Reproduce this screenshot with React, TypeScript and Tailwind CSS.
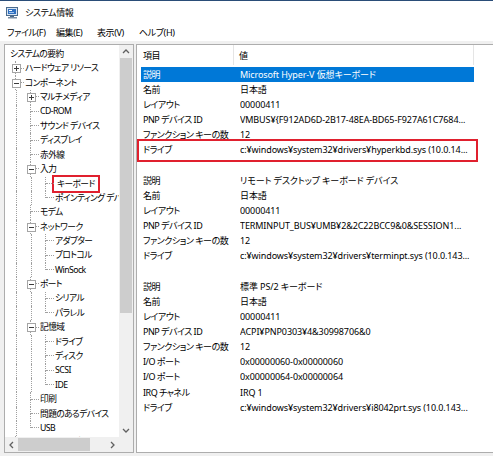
import React from 'react'

type Node = {
  label: string
  toggle?: '+' | '-'
  selected?: boolean
  children?: Node[]
}

type Row = {
  label: string
  depth: number
  guides: boolean[]
  last: boolean
  toggle?: '+' | '-'
  selected?: boolean
}

const tree: Node = {
  label: 'システムの要約',
  children: [
    { label: 'ハードウェア リソース', toggle: '+' },
    {
      label: 'コンポーネント',
      toggle: '-',
      children: [
        { label: 'マルチメディア', toggle: '+' },
        { label: 'CD-ROM' },
        { label: 'サウンド デバイス' },
        { label: 'ディスプレイ' },
        { label: '赤外線' },
        {
          label: '入力',
          toggle: '-',
          children: [{ label: 'キーボード', selected: true }, { label: 'ポインティング デバイス' }],
        },
        { label: 'モデム' },
        {
          label: 'ネットワーク',
          toggle: '-',
          children: [{ label: 'アダプター' }, { label: 'プロトコル' }, { label: 'WinSock' }],
        },
        {
          label: 'ポート',
          toggle: '-',
          children: [{ label: 'シリアル' }, { label: 'パラレル' }],
        },
        {
          label: '記憶域',
          toggle: '-',
          children: [{ label: 'ドライブ' }, { label: 'ディスク' }, { label: 'SCSI' }, { label: 'IDE' }],
        },
        { label: '印刷' },
        { label: '問題のあるデバイス' },
        { label: 'USB' },
      ],
    },
    { label: 'ソフトウェア環境', toggle: '+' },
  ],
}

// flatten the tree into rows, remembering which guide columns keep going
function flatten(node: Node, depth: number, guides: boolean[], last: boolean, out: Row[]) {
  out.push({ label: node.label, depth, guides, last, toggle: node.toggle, selected: node.selected })
  const kids = node.children || []
  kids.forEach((child, i) => {
    const childGuides = depth === 0 ? [] : [...guides, !last]
    flatten(child, depth + 1, childGuides, i === kids.length - 1, out)
  })
  return out
}

const rows = flatten(tree, 0, [], true, [])

function ToggleBox({ sign }: { sign: '+' | '-' }) {
  return (
    <div className="absolute left-[3px] top-[3px] flex h-[9px] w-[9px] items-center justify-center border border-[#a5a5a5] bg-white">
      <div className="relative flex h-[5px] w-[5px] items-center justify-center">
        <div className="h-px w-[5px] bg-[#3c3c3c]" />
        {sign === '+' && <div className="absolute h-[5px] w-px bg-[#3c3c3c]" />}
      </div>
    </div>
  )
}

function Connector({ last, toggle }: { last: boolean; toggle?: '+' | '-' }) {
  return (
    <div className="relative grid h-full w-[15px] shrink-0 grid-cols-[7px_8px] grid-rows-2">
      <div className="border-r border-dotted border-[#a0a0a0]" />
      <div className="border-b border-dotted border-[#a0a0a0]" />
      <div className={last ? '' : 'border-r border-dotted border-[#a0a0a0]'} />
      <div />
      {toggle && <ToggleBox sign={toggle} />}
    </div>
  )
}

function TreeRow({ row }: { row: Row }) {
  return (
    <div className="flex h-[14.4px] shrink-0 items-center whitespace-nowrap">
      {row.guides.map((g, i) => (
        <div key={i} className="h-full w-[15px] shrink-0">
          {g && <div className="h-full w-[8px] border-r border-dotted border-[#a0a0a0]" />}
        </div>
      ))}
      {row.depth > 0 && <Connector last={row.last} toggle={row.toggle} />}
      {row.selected ? (
        <span className="ml-px inline-block h-[12px] px-[2px] leading-[12px] outline-2 outline-offset-[1px] outline-[#e0202e]">
          {row.label}
        </span>
      ) : (
        <span className="ml-px">{row.label}</span>
      )}
    </div>
  )
}

function Chevron({ dir }: { dir: 'up' | 'down' | 'left' | 'right' }) {
  const d = {
    up: 'M1 5 L4 2 L7 5',
    down: 'M1 2 L4 5 L7 2',
    left: 'M5 1 L2 4 L5 7',
    right: 'M2 1 L5 4 L2 7',
  }[dir]
  return (
    <svg width="8" height="8" viewBox="0 0 8 8">
      <path d={d} fill="none" stroke="#606060" strokeWidth="1.3" />
    </svg>
  )
}

type Prop = { key: string; value: string; boxed?: boolean; active?: boolean }

const props: Prop[] = [
  { key: '説明', value: 'Microsoft Hyper-V 仮想キーボード', active: true },
  { key: '名前', value: '日本語' },
  { key: 'レイアウト', value: '00000411' },
  { key: 'PNP デバイス ID', value: 'VMBUS¥{F912AD6D-2B17-48EA-BD65-F927A61C7684...' },
  { key: 'ファンクション キーの数', value: '12' },
  { key: 'ドライブ', value: 'c:¥windows¥system32¥drivers¥hyperkbd.sys (10.0.14...', boxed: true },
  { key: '', value: '' },
  { key: '説明', value: 'リモート デスクトップ キーボード デバイス' },
  { key: '名前', value: '日本語' },
  { key: 'レイアウト', value: '00000411' },
  { key: 'PNP デバイス ID', value: 'TERMINPUT_BUS¥UMB¥2&2C22BCC9&0&SESSION1...' },
  { key: 'ファンクション キーの数', value: '12' },
  { key: 'ドライブ', value: 'c:¥windows¥system32¥drivers¥terminpt.sys (10.0.143...' },
  { key: '', value: '' },
  { key: '説明', value: '標準 PS/2 キーボード' },
  { key: '名前', value: '日本語' },
  { key: 'レイアウト', value: '00000411' },
  { key: 'PNP デバイス ID', value: 'ACPI¥PNP0303¥4&30998706&0' },
  { key: 'ファンクション キーの数', value: '12' },
  { key: 'I/O ポート', value: '0x00000060-0x00000060' },
  { key: 'I/O ポート', value: '0x00000064-0x00000064' },
  { key: 'IRQ チャネル', value: 'IRQ 1' },
  { key: 'ドライブ', value: 'c:¥windows¥system32¥drivers¥i8042prt.sys (10.0.143...' },
]

function AppIcon() {
  return (
    <svg width="13" height="12" viewBox="0 0 13 12">
      <rect x="0.5" y="0.5" width="11" height="8" fill="#d6e4f2" stroke="#4a6a8c" />
      <rect x="2" y="2" width="8" height="5" fill="#2f6fc0" />
      <rect x="3" y="3" width="3" height="1" fill="#ffffff" />
      <rect x="3" y="5" width="5" height="1" fill="#9fc4ee" />
      <rect x="4" y="9" width="4" height="1" fill="#4a6a8c" />
      <rect x="2" y="10" width="9" height="1.5" fill="#7a8ea4" />
    </svg>
  )
}

export default function App() {
  return (
    <div className="flex h-[456px] w-[493px] flex-col overflow-hidden bg-[#f0f0f0] font-['Noto_Sans','Noto_Sans_CJK_JP',sans-serif] text-[9px] leading-none tracking-[-0.4px] text-black [font-feature-settings:'palt']">
      <div className="h-px shrink-0 bg-[#2a4d78]" />

      {/* title bar */}
      <div className="flex h-[23px] shrink-0 items-center gap-[6px] bg-white pl-[6px]">
        <AppIcon />
        <span>システム情報</span>
      </div>

      {/* menu */}
      <div className="flex h-[17px] shrink-0 items-center bg-white pl-[7px]">
        <span className="w-[49px]">ファイル(F)</span>
        <span className="w-[41px]">編集(E)</span>
        <span className="w-[42px]">表示(V)</span>
        <span>ヘルプ(H)</span>
      </div>

      <div className="flex min-h-0 flex-1 gap-[2px] pl-[4px] pt-[3px] pb-[3px]">
        {/* tree pane */}
        <div className="flex w-[130px] shrink-0 flex-col border border-[#adadad] bg-white">
          <div className="flex min-h-0 flex-1">
            <div className="flex min-w-0 flex-1 flex-col overflow-hidden pl-[4px] pt-[2px] text-[8.7px] tracking-[-0.55px]">
              {rows.map((r, i) => (
                <TreeRow key={i} row={r} />
              ))}
            </div>
            <div className="flex w-[14px] shrink-0 flex-col bg-[#f0f0f0]">
              <div className="flex h-[13px] shrink-0 items-center justify-center">
                <Chevron dir="up" />
              </div>
              <div className="mx-[1px] h-[255px] shrink-0 bg-[#cdcdcd]" />
              <div className="flex-1" />
              <div className="flex h-[13px] shrink-0 items-center justify-center">
                <Chevron dir="down" />
              </div>
            </div>
          </div>
          <div className="flex h-[15px] shrink-0 items-center bg-[#f0f0f0]">
            <div className="flex w-[13px] justify-center">
              <Chevron dir="left" />
            </div>
            <div className="h-[13px] w-[72px] bg-[#cdcdcd]" />
            <div className="flex-1" />
            <div className="flex w-[13px] justify-center">
              <Chevron dir="right" />
            </div>
            <div className="w-[14px]" />
          </div>
        </div>

        {/* details pane */}
        <div className="flex min-w-0 flex-1 flex-col border-y border-l border-[#adadad] bg-white">
          <div className="flex h-[20px] shrink-0 items-center">
            <div className="flex h-full w-[97px] items-center border-r border-[#e5e5e5] pl-[6px]">項目</div>
            <div className="flex h-full w-[240px] items-center border-r border-[#e5e5e5] pl-[5px]">値</div>
          </div>
          <div className="pl-[4px] pt-[2px]">
            {props.map((p, i) => (
              <div
                key={i}
                className={
                  'flex h-[15.15px] w-[333px] items-center whitespace-nowrap leading-[14px] ' +
                  (p.active ? 'bg-[#0078d7] text-white ' : '') +
                  (p.boxed ? 'outline-2 outline-offset-[2px] outline-[#e0202e]' : '')
                }
              >
                <div className="w-[99px] shrink-0 pl-[2px] tracking-[-0.5px]">{p.key}</div>
                <div className="min-w-0 flex-1 overflow-hidden tracking-[-0.1px]">{p.value}</div>
              </div>
            ))}
          </div>
        </div>
      </div>
    </div>
  )
}
